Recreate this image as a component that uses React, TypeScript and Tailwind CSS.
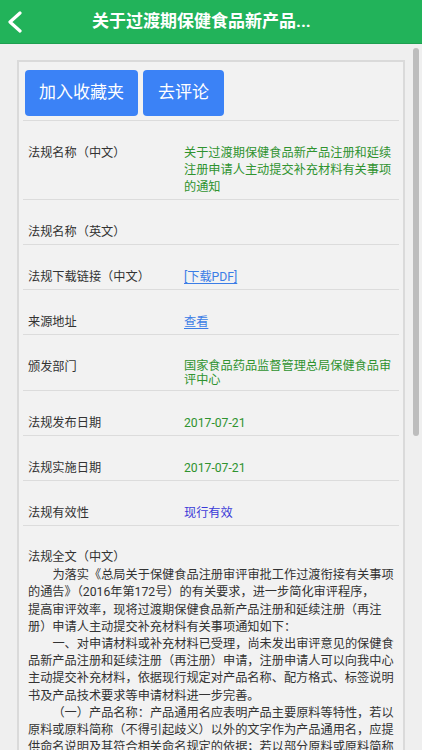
import React from "react";

const font = {
  fontFamily: '"Roboto", "Noto Sans CJK SC", "Noto Sans", sans-serif',
};

type Row = {
  label: string;
  value?: React.ReactNode;
  tight?: boolean;
};

const rows: Row[] = [
  {
    label: "法规名称（中文）",
    value: (
      <span className="text-[#2f932f]">
        关于过渡期保健食品新产品注册和延续注册申请人主动提交补充材料有关事项的通知
      </span>
    ),
  },
  { label: "法规名称（英文）" },
  {
    label: "法规下载链接（中文）",
    value: <a className="text-[#3b7de6] underline underline-offset-2">[下载PDF]</a>,
  },
  {
    label: "来源地址",
    value: <a className="text-[#3b7de6] underline underline-offset-2">查看</a>,
  },
  {
    label: "颁发部门",
    tight: true,
    value: (
      <span className="text-[#2f932f]">国家食品药品监督管理总局保健食品审评中心</span>
    ),
  },
  { label: "法规发布日期", value: <span className="text-[#2f932f]">2017-07-21</span> },
  { label: "法规实施日期", value: <span className="text-[#2f932f]">2017-07-21</span> },
  { label: "法规有效性", value: <span className="text-[#3a3ad8]">现行有效</span> },
];

const paragraphs: React.ReactNode[] = [
  <>
    为落实《总局关于保健食品注册审评审批工作过渡衔接有关事项的通告》（2016年第172号）的有关要求，进一步简化审评程序，
    <span className="whitespace-nowrap">提高审评效率</span>
    ，现将过渡期保健食品新产品注册和延续注册（再注册）申请人主动提交补充材料有关事项通知如下：
  </>,
  "一、对申请材料或补充材料已受理，尚未发出审评意见的保健食品新产品注册和延续注册（再注册）申请，注册申请人可以向我中心主动提交补充材料，依据现行规定对产品名称、配方格式、标签说明书及产品技术要求等申请材料进一步完善。",
  "（一）产品名称：产品通用名应表明产品主要原料等特性，若以原料或原料简称（不得引起歧义）以外的文字作为产品通用名，应提供命名说明及其符合相关命名规定的依据；若以部分原料或原料简称作为产品通用名，应说明理由。",
];

export default function App() {
  return (
    <div className="relative min-h-screen bg-[#efefef] pb-6" style={font}>
      <header className="flex h-[44px] items-center border-b border-[#1e9f50] bg-[#22b35a]">
        <svg
          className="ml-[7px] h-[22px] w-[16px]"
          viewBox="0 0 16 22"
          fill="none"
          stroke="white"
          strokeWidth="3.2"
          strokeLinecap="round"
          strokeLinejoin="round"
        >
          <polyline points="13,2 3,11 13,20" />
        </svg>
        <h1 className="ml-[69px] text-[17px] font-bold text-white">
          关于过渡期保健食品新产品...
        </h1>
      </header>

      <main className="mx-[17px] mt-[16px] border-2 border-[#dadada] bg-[#f2f2f2]">
        <div className="flex gap-[5px] pl-[6px] pt-[8px] pb-[4px]">
          <button className="h-[46px] rounded-[4px] bg-[#3b82f6] px-[14px] text-[17px] text-white">
            加入收藏夹
          </button>
          <button className="h-[46px] rounded-[4px] bg-[#3b82f6] px-[15px] text-[17px] text-white">
            去评论
          </button>
        </div>

        <div className="mx-[4px] border-t border-[#dcdcdc]">
          {rows.map((r) => (
            <div
              key={r.label}
              className="flex border-b border-[#dcdcdc] pt-[24px] pb-[3px] pl-[5px] pr-[3px] text-[12.2px] leading-[17px]"
            >
              <div className="w-[156px] shrink-0 text-[#333]">{r.label}</div>
              <div className={`flex-1 ${r.tight ? "leading-[14px]" : ""}`}>{r.value}</div>
            </div>
          ))}

          <div className="pt-[23px] pl-[5px] pr-[3px] text-[12.2px] leading-[17.2px] text-[#333]">
            <div className="mb-[1px]">法规全文（中文）</div>
            {paragraphs.map((p, i) => (
              <p key={i} className="indent-[2em]">
                {p}
              </p>
            ))}
          </div>
        </div>
      </main>

      <div className="absolute right-[3px] top-[48px] h-[388px] w-[6px] rounded-full bg-[#bdbdbd]" />
    </div>
  );
}
